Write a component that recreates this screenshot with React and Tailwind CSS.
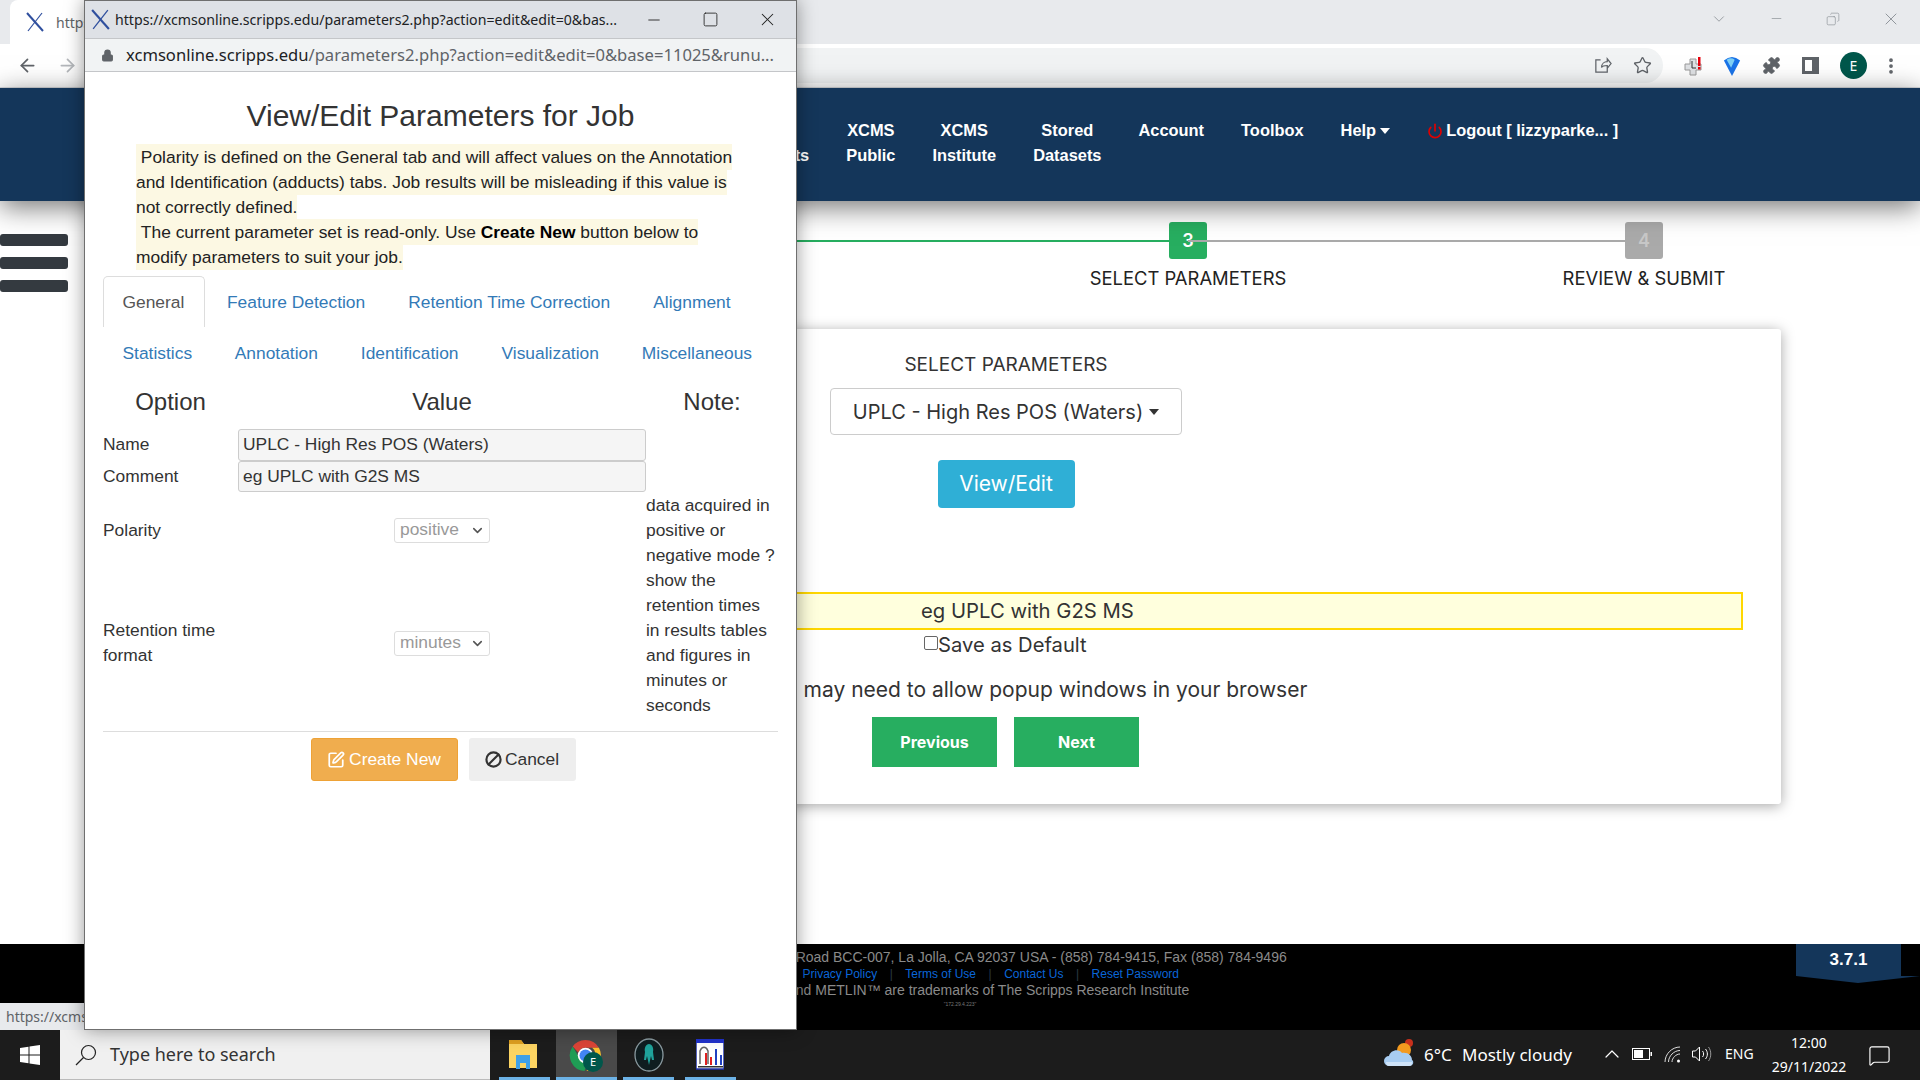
import React from "react";
import { ArrowLeft, ArrowRight, Star, Puzzle, EllipsisVertical, Lock, ChevronDown, ChevronUp, Copy, Power, SquarePen, Ban, Minus, Square, X, MessageSquare } from "lucide-react";

const sans = "font-['Liberation_Sans',Arial,sans-serif]";
const mont = "font-['Inter',sans-serif]";
const seg = "font-['Noto_Sans',sans-serif]";

function XLogo({ className }) {
  return (
    <svg viewBox="0 0 20 20" className={className} fill="none" stroke="#2f4f9e">
      <path d="M2 1 L18 19" strokeWidth="2" />
      <path d="M17 1 L3 19" strokeWidth="1.2" />
    </svg>
  );
}

function ChromeLogo({ className }) {
  return (
    <svg viewBox="0 0 32 32" className={className}>
      <path d="M16 1a15 15 0 0 1 13 7.500H16a7.500 7.500 0 0 0-7 4.700L3.600 7.300A15 15 0 0 1 16 1z" fill="#dc4437" />
      <path d="M29 8.500a15 15 0 0 1-12 22.500l6.500-11.200A7.500 7.500 0 0 0 22.500 8.500z" fill="#fbc02d" />
      <path d="M3.600 7.300 L10 18.500a7.500 7.500 0 0 0 8 5.200L15 31A15 15 0 0 1 3.600 7.300z" fill="#1f9d55" />
      <circle cx="16" cy="16" r="7.500" fill="#fff" />
      <circle cx="16" cy="16" r="5.800" fill="#4285f4" />
    </svg>
  );
}

function Caret({ className }) {
  return <span className={`inline-block w-0 h-0 border-x-[5px] border-x-transparent border-t-[6px] ${className}`} />;
}

function TabBar() {
  return (
    <div className="h-[44px] bg-[#e8eaed] flex items-stretch shrink-0">
      <div className="ml-[10px] w-[300px] bg-white rounded-t-lg flex items-center pl-[15px] gap-[11px]">
        <XLogo className="w-[20px] h-[20px]" />
        <span className={`${seg} text-[14px] text-[#5f6368]`}>https://xcmsonline</span>
      </div>
      <div className="flex-1 flex items-center justify-end text-[#80868b] pb-[7px]">
        <ChevronDown size={18} strokeWidth={1} className="mr-[41px]" />
        <Minus size={15} strokeWidth={1} className="mr-[42px]" />
        <Copy size={14} strokeWidth={1} className="mr-[41px] -scale-x-100" />
        <X size={20} strokeWidth={1} className="mr-[19px]" />
      </div>
    </div>
  );
}

function Toolbar() {
  return (
    <div className="h-[44px] bg-white border-b border-[#dadce0] flex items-center shrink-0 text-[#5f6368]">
      <ArrowLeft size={21} strokeWidth={2} className="ml-[17px]" />
      <ArrowRight size={21} strokeWidth={2} className="ml-[19px] text-[#b5b8bc]" />
      <div className="ml-[23px] w-[1562px] h-[35px] rounded-r-full bg-[#f1f3f4] flex items-center justify-end">
        <svg viewBox="0 0 20 20" className="w-[19px] h-[19px] mr-[21px]" fill="none" stroke="#5f6368" strokeWidth="1.300">
          <path d="M8 4H3v13h12v-5M9 12c0-4 3-6 6-6V3l4 5-4 5v-3c-3 0-5 0-6 2z" />
        </svg>
        <Star size={19} strokeWidth={1.700} className="mr-[11px]" />
      </div>
      <svg viewBox="0 0 20 20" className="ml-[20px] w-[20px] h-[22px]">
        <path d="M7 3h6v5h5v6h-5v5H7v-5H2V8h5z" fill="#dfe1e4" stroke="#9a9a9a" />
        <path d="M9 5v7h4" stroke="#333" fill="none" />
        <rect x="15" y="1" width="2.500" height="9" fill="#e8000d" />
        <rect x="15" y="11" width="2.500" height="2.500" fill="#e8000d" />
      </svg>
      <svg viewBox="0 0 20 24" className="ml-[20px] w-[18px] h-[22px]">
        <path d="M1 6 Q10 -2 19 6 L10 23 Z" fill="#1a73e8" />
        <path d="M4 5 Q9 2 13 5 L9 14 Z" fill="#7fd0f5" />
      </svg>
      <Puzzle size={19} fill="#5f6368" strokeWidth={1} className="ml-[21px]" />
      <div className="ml-[21px] w-[17px] h-[17px] border-[3px] border-[#5f6368] border-r-[7px]" />
      <div className={`ml-[21px] w-[27px] h-[27px] rounded-full bg-[#00574b] text-white text-[14px] flex items-center justify-center ${seg}`}>E</div>
      <EllipsisVertical size={20} strokeWidth={2.500} className="ml-[14px]" />
    </div>
  );
}

function Nav() {
  const items = [["My", "Results"], ["XCMS", "Public"], ["XCMS", "Institute"], ["Stored", "Datasets"]];
  return (
    <div className={`relative z-10 h-[113px] bg-[#14365a] shadow-[0_6px_26px_rgba(0,0,0,0.55)] shrink-0 pl-[750px] pt-[30px] flex items-start gap-[37px] ${sans} text-white font-bold text-[16.400px] leading-[25px]`}>
      {items.map((it) => (
        <div key={it[1]} className="text-center">
          <div>{it[0]}</div>
          <div>{it[1]}</div>
        </div>
      ))}
      <span>Account</span>
      <span>Toolbox</span>
      <span className="flex items-center gap-[4px]">Help <Caret className="border-t-white" /></span>
      <span className="flex items-center gap-[3px]">
        <Power size={16} strokeWidth={2.500} className="text-[#e00000]" />
        Logout [ lizzyparke... ]
      </span>
    </div>
  );
}

function Step({ n, label, state, line }) {
  const lineCls = line === "green" ? "bg-[#27ae60]" : "bg-[#aaaaaa]";
  const boxCls = state === "on" ? "bg-[#27ae60] text-white" : "bg-[#aaaaaa] text-[#c8c8c8]";
  return (
    <div className="relative flex flex-col items-center">
      {line && <div className={`absolute right-1/2 top-[18px] w-full h-[2px] ${lineCls}`} />}
      <div className={`relative w-[38px] h-[37px] rounded-[3px] flex items-center justify-center text-[18px] font-semibold ${boxCls}`}>{n}</div>
      <div className="mt-[7px] text-[18.400px] leading-[24px] text-[#222] whitespace-nowrap">{label}</div>
    </div>
  );
}

function Main() {
  return (
    <div className={`relative flex-1 bg-white ${mont} overflow-hidden`}>
      <div className="absolute left-0 top-[33px] w-[68px] flex flex-col gap-[11px]">
        <div className="h-[12px] rounded-[3px] bg-[#343a40]" />
        <div className="h-[12px] rounded-[3px] bg-[#343a40]" />
        <div className="h-[12px] rounded-[3px] bg-[#343a40]" />
      </div>
      <div className="pt-[21px] pl-[48px] w-[1872px] grid grid-cols-4">
        <Step n="1" label="SELECT DATASET 1" state="on" />
        <Step n="2" label="DATASET 2" state="on" line="green" />
        <Step n="3" label="SELECT PARAMETERS" state="on" line="green" />
        <Step n="4" label="REVIEW & SUBMIT" state="off" line="gray" />
      </div>
      <div className="mt-[39px] ml-[260px] w-[1521px] h-[475px] bg-white rounded-[3px] shadow-[0_2px_14px_rgba(0,0,0,0.35)] pt-[24px] text-[#333]">
        <div className="ml-[570px] w-[352px] flex flex-col items-center">
          <div className="text-[19px] leading-[24px]">SELECT PARAMETERS</div>
          <div className="mt-[11px] w-[352px] h-[47px] border border-[#ccc] rounded-[4px] flex items-center justify-center gap-[6px] text-[20px]">
            UPLC - High Res POS (Waters) <Caret className="border-t-[#333]" />
          </div>
          <div className="mt-[25px] w-[137px] h-[48px] bg-[#2fafd6] rounded-[4px] text-white text-[21px] flex items-center justify-center">View/Edit</div>
        </div>
        <div className="mt-[84px] ml-[40px] w-[1443px] h-[38px] border-2 border-[#ffd700] bg-[#ffffdd] pl-[619px] flex items-center text-[20.300px] text-[#333]">eg UPLC with G2S MS</div>
        <div className="mt-[3px] pl-[664px] h-[24px] flex items-center text-[20.200px]">
          <span className="w-[14px] h-[14px] border border-[#666] rounded-[2px] -mt-[4px]" />
          Save as Default
        </div>
        <div className="mt-[21px] pl-[500px] text-[21px] leading-[24px] whitespace-nowrap">You may need to allow popup windows in your browser</div>
        <div className="mt-[15px] ml-[612px] flex gap-[17px]">
          <div className="w-[125px] h-[50px] bg-[#27ae60] text-white font-bold text-[16px] flex items-center justify-center">Previous</div>
          <div className="w-[125px] h-[50px] bg-[#27ae60] text-white font-bold text-[16px] flex items-center justify-center">Next</div>
        </div>
      </div>
    </div>
  );
}

function Footer() {
  const links = ["About Us", "Privacy Policy", "Terms of Use", "Contact Us", "Reset Password"];
  return (
    <div className={`relative h-[86px] bg-black shrink-0 pt-[5px] text-center ${sans} text-[14px] leading-[16.500px] text-[#8a8a8a]`}>
      <div>10550 North Torrey Pines Road BCC-007, La Jolla, CA 92037 USA - (858) 784-9415, Fax (858) 784-9496</div>
      <div className="flex justify-center gap-[12.500px] pr-[16px] text-[12px] text-[#0a66d8]">
        {links.map((l, i) => (
          <React.Fragment key={l}>
            {i > 0 && <span className="text-[#2a3a44]">|</span>}
            <span>{l}</span>
          </React.Fragment>
        ))}
      </div>
      <div className="pl-[13px]">XCMS and METLIN™ are trademarks of The Scripps Research Institute</div>
      <div className="text-[5px] leading-[10px] text-[#777]">"172.29.4.223"</div>
      <div className="absolute right-[19px] top-0 w-[105px] h-[32px] bg-[#14365a] flex items-center justify-center font-bold text-[17px] text-white">3.7.1</div>
      <svg viewBox="0 0 124 7" className="absolute right-0 top-[32px] w-[124px] h-[7px]">
        <path d="M0 0 H124 L62 7 Z" fill="#14365a" />
      </svg>
    </div>
  );
}

function Taskbar() {
  return (
    <div className={`relative z-10 h-[50px] bg-[#1c1c1c] shrink-0 flex items-stretch ${seg}`}>
      <div className="w-[60px] flex items-center justify-center">
        <svg viewBox="0 0 20 20" className="w-[20px] h-[20px]" fill="#fff">
          <path d="M0 3 L8.500 1.700 V9.500 H0 Z M9.500 1.500 L20 0 V9.500 H9.500 Z M0 10.500 H8.500 V18.300 L0 17 Z M9.500 10.500 H20 V20 L9.500 18.500 Z" />
        </svg>
      </div>
      <div className="w-[430px] bg-[#f0f0f0] flex items-center pl-[15px] text-[18px] text-[#333] border-b border-[#bbb]">
        <svg viewBox="0 0 22 22" className="w-[22px] h-[22px]" fill="none" stroke="#222" strokeWidth="1.200">
          <circle cx="13.500" cy="8.500" r="7" />
          <path d="M8.500 13.500 L1 21" />
        </svg>
        <span className="ml-[13px]">Type here to search</span>
      </div>
      <div className="relative w-[66px] flex items-center justify-center">
        <svg viewBox="0 0 28 32" className="w-[28px] h-[32px]">
          <path d="M0 1h12l3 4h13v24H0z" fill="#fcd462" />
          <path d="M0 1h12l3 4H0z" fill="#e0a020" />
          <path d="M7 16h14v14H17v-6h-6v6H7z" fill="#3fa0e8" />
          <rect x="11" y="24" width="6" height="5" fill="#fcd462" />
        </svg>
        <div className="absolute bottom-0 left-[9px] w-[51px] h-[3px] bg-[#6cb2e6]" />
      </div>
      <div className="relative w-[61px] bg-[#4a4a4a] flex items-center justify-center">
        <ChromeLogo className="w-[33px] h-[33px] -ml-[2px]" />
        <div className="absolute left-[27px] top-[22px] w-[20px] h-[20px] rounded-full bg-[#00574b] text-white text-[11px] flex items-center justify-center">E</div>
        <div className="absolute bottom-0 left-0 right-0 h-[3px] bg-[#6cb2e6]" />
      </div>
      <div className="relative w-[68px] flex items-center justify-center">
        <svg viewBox="0 0 30 34" className="w-[30px] h-[34px] -ml-[4px]">
          <ellipse cx="15" cy="17" rx="14" ry="16" fill="#0f1d20" stroke="#8a9aa0" strokeWidth="1.300" />
          <path d="M15 6c3 0 5 4 4 8l1 8h-2l-1-4-2 9-2-9-1 4h-2l1-8c-1-4 1-8 4-8z" fill="#1fa39b" />
        </svg>
        <div className="absolute bottom-0 left-[6px] w-[51px] h-[3px] bg-[#6cb2e6]" />
      </div>
      <div className="relative w-[51px] flex items-center justify-center">
        <svg viewBox="0 0 28 32" className="w-[28px] h-[32px] -ml-[2px]">
          <rect x="0" y="0" width="28" height="30" fill="#fff" stroke="#2233aa" strokeWidth="1.500" />
          <rect x="0" y="0" width="28" height="4" fill="#2233cc" />
          <path d="M4 25V12c2-5 6-5 8 0v13" fill="none" stroke="#666" strokeWidth="1.500" />
          <path d="M9 26V14h2v12zM14 26V18h2v8z" fill="#e02020" />
          <path d="M19 26V10h2v16zM24 26V16h2v10z" fill="#2040c0" />
          <rect x="2" y="27" width="25" height="1.500" fill="#333" />
        </svg>
        <div className="absolute bottom-0 left-0 right-0 h-[3px] bg-[#6cb2e6]" />
      </div>
      <div className="flex-1 flex items-center justify-end text-white relative">
        <svg viewBox="0 0 30 32" className="absolute left-[648px] top-[8px] w-[30px] h-[32px]">
          <circle cx="25" cy="5" r="4" fill="#c8301c" />
          <circle cx="20" cy="12" r="7" fill="#f39a1f" />
          <path d="M5 28a5 5 0 0 1 0-10c1-6 10-8 13-3 6-1 10 3 10 7 2 1 2 6-3 6z" fill="#a8cdf2" />
          <path d="M2 24h26v1c0 2-1 3-3 3H5c-2 0-3-1-3-4z" fill="#cfe3f8" />
        </svg>
        <span className="absolute left-[688px] top-[12px] text-[17px] leading-[26px]">6°C</span>
        <span className="absolute left-[726px] top-[12px] text-[17px] leading-[26px] whitespace-nowrap">Mostly cloudy</span>
        <ChevronUp size={24} strokeWidth={1.200} className="absolute left-[864px] top-[12px]" />
        <svg viewBox="0 0 20 12" className="absolute left-[896px] top-[18px] w-[20px] h-[12px]" fill="none" stroke="#fff">
          <rect x="0.500" y="0.500" width="17" height="11" />
          <rect x="2" y="2" width="9" height="8" fill="#fff" stroke="none" />
          <rect x="18.500" y="4" width="1.500" height="4" fill="#fff" stroke="none" />
        </svg>
        <svg viewBox="0 0 18 18" className="absolute left-[928px] top-[16px] w-[18px] h-[18px]" fill="none" stroke="#ddd" strokeWidth="1">
          <path d="M1 16C1 8 8 1 16 1M4.500 16C4.500 10 10 4.500 16 4.500M8 16C8 12 12 8 16 8" />
          <circle cx="14.500" cy="15" r="1.500" fill="#fff" stroke="none" />
        </svg>
        <svg viewBox="0 0 20 18" className="absolute left-[955px] top-[15px] w-[21px] h-[18px]" fill="none" stroke="#fff" strokeWidth="1">
          <path d="M1 6h3l4-4v14l-4-4H1zM11 6c1.500 1.500 1.500 4.500 0 6M14 4c2.500 3 2.500 7 0 10" />
          <path d="M17 2c3 4 3 10 0 14" stroke="#999" />
        </svg>
        <span className="absolute left-[989px] top-[13px] text-[14px] leading-[22px]">ENG</span>
        <div className="absolute left-[1034px] top-[1px] w-[78px] text-center text-[14px] leading-[24px]">
          <div>12:00</div>
          <div className="whitespace-nowrap">29/11/2022</div>
        </div>
        <MessageSquare size={23} strokeWidth={1.200} className="absolute left-[1132px] top-[14px]" />
      </div>
    </div>
  );
}

function TabLink({ children, active, first, h }) {
  return (
    <div className={`${h} ${first ? "pl-[18.500px] pr-[20.100px]" : "px-[20.500px]"} flex items-center rounded-t-[5px] border border-b-0 ${active ? "border-[#dddddd] text-[#555]" : "border-transparent text-[#337ab7]"}`}>
      {children}
    </div>
  );
}

function Row({ label, note, h, children }) {
  return (
    <div className="flex items-center" style={{ height: h }}>
      <div className="w-[135px] pr-[10px]">{label}</div>
      <div className="w-[408px] flex justify-center">{children}</div>
      <div className="w-[132px] whitespace-normal">{note}</div>
    </div>
  );
}

function FakeSelect({ children }) {
  return (
    <div className="w-[96px] h-[25px] border border-[#ddd] rounded-[3px] flex items-center justify-between pl-[5px] pr-[4px] text-[#999] leading-none">
      {children}
      <ChevronDown size={15} strokeWidth={2.500} className="text-[#555]" />
    </div>
  );
}

function Popup() {
  const mark = "bg-[#fcf8e3] [box-decoration-break:clone] py-[3px]";
  return (
    <div className="absolute left-[84px] top-0 w-[713px] h-[1030px] z-20 bg-white border-x border-b border-[#6f6f6f] shadow-[0_0_18px_rgba(0,0,0,0.4)] flex flex-col">
      <div className="h-[38px] bg-[#dee1e6] flex items-center shrink-0 border-t border-[#6f6f6f]">
        <XLogo className="ml-[5px] w-[21px] h-[21px]" />
        <span className={`ml-[4px] w-[515px] ${seg} text-[14.150px] text-[#202124] whitespace-nowrap overflow-hidden`}>https://xcmsonline.scripps.edu/parameters2.php?action=edit&amp;edit=0&amp;bas...</span>
        <Minus size={18} strokeWidth={1.200} className="ml-[15px] text-[#222]" />
        <Square size={17} strokeWidth={1.200} className="ml-[39px] text-[#222]" />
        <X size={21} strokeWidth={1.200} className="ml-[38px] text-[#222]" />
      </div>
      <div className="h-[34px] bg-[#f1f3f4] flex items-center shrink-0 border-y border-[#c4c6c9]">
        <Lock size={13} fill="#5f6368" strokeWidth={2} className="ml-[16px] text-[#5f6368]" />
        <span className={`ml-[12px] ${seg} text-[16.600px] whitespace-nowrap text-[#5f6368]`}>
          <span className="text-[#202124]">xcmsonline.scripps.edu</span>/parameters2.php?action=edit&amp;edit=0&amp;base=11025&amp;runu...
        </span>
      </div>
      <div className={`flex-1 ${sans} text-[17.400px] leading-[25px] text-[#333] pl-[18px] w-[693px]`}>
        <h1 className="pt-[27px] text-center text-[30px] leading-[33px] font-normal text-[#333]">View/Edit Parameters for Job</h1>
        <div className="mt-[13px] ml-[33px] w-[602px] text-[#222]">
          <span className={mark}>&nbsp;Polarity is defined on the General tab and will affect values on the Annotation and Identification (adducts) tabs. Job results will be misleading if this value is not correctly defined.</span>
          <br />
          <span className={mark}>&nbsp;The current parameter set is read-only. Use <b className="text-black">Create New</b> button below to modify parameters to suit your job.</span>
        </div>
        <div className="mt-[6px] flex">
          <TabLink active first h="h-[51px]">General</TabLink>
          <TabLink h="h-[51px]">Feature Detection</TabLink>
          <TabLink h="h-[51px]">Retention Time Correction</TabLink>
          <TabLink h="h-[51px]">Alignment</TabLink>
        </div>
        <div className="flex">
          <TabLink first h="h-[52px]">Statistics</TabLink>
          <TabLink h="h-[52px]">Annotation</TabLink>
          <TabLink h="h-[52px]">Identification</TabLink>
          <TabLink h="h-[52px]">Visualization</TabLink>
          <TabLink h="h-[52px]">Miscellaneous</TabLink>
        </div>
        <div className="mt-[6px] flex text-[24px] leading-[34px] text-center">
          <div className="w-[135px]">Option</div>
          <div className="w-[408px]">Value</div>
          <div className="w-[132px]">Note:</div>
        </div>
        <div className="mt-[9px]">
          <Row label="Name" h={33}>
            <div className="w-[408px] h-[32px] bg-[#f5f5f5] border border-[#ccc] rounded-[3px] pl-[4px] flex items-center">UPLC - High Res POS (Waters)</div>
          </Row>
          <Row label="Comment" h={31}>
            <div className="w-[408px] h-[31px] bg-[#f5f5f5] border border-[#ccc] rounded-[3px] pl-[4px] flex items-center">eg UPLC with G2S MS</div>
          </Row>
          <Row label="Polarity" h={76} note="data acquired in positive or negative mode ?">
            <FakeSelect>positive</FakeSelect>
          </Row>
          <Row label="Retention time format" h={150} note="show the retention times in results tables and figures in minutes or seconds">
            <FakeSelect>minutes</FakeSelect>
          </Row>
        </div>
        <div className="mt-[13px] border-t border-[#ddd] pt-[6px] flex justify-center gap-[11px] pl-[5px]">
          <div className="w-[147px] h-[43px] rounded-[3px] bg-[#f0ad4e] border border-[#eea236] text-white flex items-center justify-center gap-[4px]">
            <SquarePen size={18} strokeWidth={2.300} />Create New
          </div>
          <div className="w-[107px] h-[43px] rounded-[3px] bg-[#eeeeee] text-[#333] flex items-center justify-center gap-[3px]">
            <Ban size={17} strokeWidth={3} className="-scale-x-100" />Cancel
          </div>
        </div>
      </div>
    </div>
  );
}

export default function App() {
  return (
    <div className="relative w-[1920px] h-[1080px] overflow-hidden flex flex-col bg-white">
      <TabBar />
      <Toolbar />
      <Nav />
      <Main />
      <Footer />
      <Taskbar />
      <div className={`absolute left-0 top-[1003px] w-[100px] h-[27px] bg-[#e8eaed] z-10 pl-[6px] ${seg} text-[14px] leading-[27px] text-[#5f6368] whitespace-nowrap overflow-hidden`}>https://xcmsonline</div>
      <Popup />
    </div>
  );
}
